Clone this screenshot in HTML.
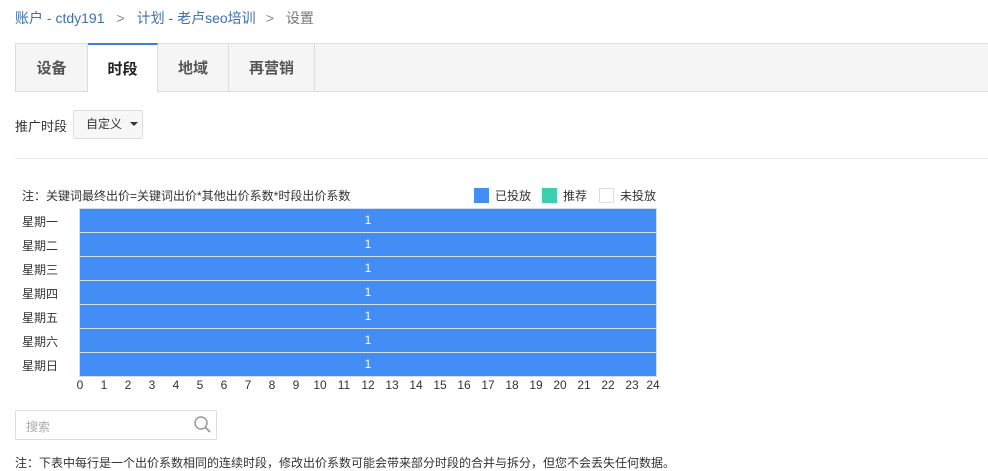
<!DOCTYPE html><html><head><meta charset="utf-8"><style>
body{margin:0;width:988px;height:470px;background:#fff;font-family:"Liberation Sans","Noto Sans CJK SC",sans-serif;font-size:12px;color:#333;position:relative;overflow:hidden}
.a{position:absolute}
.bc{left:15px;top:8px;font-size:14px;color:#3f6fb0}
.bc span{color:#888;margin:0 12px}
.tabs{left:15px;top:43px;width:973px;height:47px;background:#f5f5f5;border:1px solid #ddd;border-right:none}
.tab{position:absolute;top:0;height:47px;line-height:49px;text-align:center;font-size:15px;font-weight:bold;color:#555;border-right:1px solid #ddd}
.act{background:#fff;color:#222;border-top:2px solid #3b82d6;top:-1px;height:48px}
.dd{left:73px;top:110px;width:68px;height:27px;border:1px solid #ddd;border-radius:2px;background:#f7f7f7;line-height:27px;font-size:12px}
.row{position:absolute;left:80px;width:576px;height:23px;background:#428ef5;color:#fff;text-align:center;line-height:23px;font-size:12px}
.day{position:absolute;left:22px;font-size:12px}
.ax{position:absolute;top:378px;font-size:12px;width:20px;text-align:center}
.sw{display:inline-block;width:15px;height:15px;vertical-align:-3px;margin-right:6px}
</style></head><body>
<div class="a bc">账户 - ctdy191<span>&gt;</span>计划 - 老卢seo培训<span style="margin-left:10px">&gt;</span><b style="font-weight:normal;color:#777">设置</b></div>
<div class="a tabs">
<div class="tab" style="left:0;width:71px">设备</div>
<div class="tab act" style="left:72px;width:69px">时段</div>
<div class="tab" style="left:142px;width:70px">地域</div>
<div class="tab" style="left:213px;width:85px">再营销</div>
</div>
<div class="a" style="left:15px;top:116px;font-size:13px">推广时段</div>
<div class="a dd"><span style="margin-left:12px">自定义</span><span style="position:absolute;left:56px;top:11px;border:4px solid transparent;border-top:4px solid #333;border-bottom:0"></span></div>
<div class="a" style="left:15px;top:158px;width:973px;height:1px;background:#e8e8e8"></div>
<div class="a" style="left:22px;top:187px">注：关键词最终出价=关键词出价*其他出价系数*时段出价系数</div>
<div class="a" style="left:474px;top:187px"><span class="sw" style="background:#428ef5"></span>已投放<span class="sw" style="background:#3ccfae;margin-left:11px"></span>推荐<span class="sw" style="border:1px solid #ddd;width:13px;height:13px;margin-left:12px"></span>未投放</div>
<div class="a" style="left:79px;top:208px;width:578px;height:169px;background:#cfe0f7"></div>
<div class="row" style="top:209px">1</div><div class="row" style="top:233px">1</div><div class="row" style="top:257px">1</div><div class="row" style="top:281px">1</div><div class="row" style="top:305px">1</div><div class="row" style="top:329px">1</div><div class="row" style="top:353px">1</div>
<div class="day" style="top:213px">星期一</div><div class="day" style="top:237px">星期二</div><div class="day" style="top:261px">星期三</div><div class="day" style="top:285px">星期四</div><div class="day" style="top:309px">星期五</div><div class="day" style="top:333px">星期六</div><div class="day" style="top:357px">星期日</div>
<div class="ax" style="left:70px">0</div><div class="ax" style="left:94px">1</div><div class="ax" style="left:118px">2</div><div class="ax" style="left:142px">3</div><div class="ax" style="left:166px">4</div><div class="ax" style="left:190px">5</div><div class="ax" style="left:214px">6</div><div class="ax" style="left:238px">7</div><div class="ax" style="left:262px">8</div><div class="ax" style="left:286px">9</div><div class="ax" style="left:310px">10</div><div class="ax" style="left:334px">11</div><div class="ax" style="left:358px">12</div><div class="ax" style="left:382px">13</div><div class="ax" style="left:406px">14</div><div class="ax" style="left:430px">15</div><div class="ax" style="left:454px">16</div><div class="ax" style="left:478px">17</div><div class="ax" style="left:502px">18</div><div class="ax" style="left:526px">19</div><div class="ax" style="left:550px">20</div><div class="ax" style="left:574px">21</div><div class="ax" style="left:598px">22</div><div class="ax" style="left:622px">23</div><div class="ax" style="left:643px">24</div>
<div class="a" style="left:15px;top:410px;width:200px;height:28px;border:1px solid #ddd;border-radius:2px"><span style="position:absolute;left:10px;top:7px;color:#aaa">搜索</span>
<svg style="position:absolute;left:177px;top:4px" width="20" height="20" viewBox="0 0 20 20"><circle cx="8" cy="8" r="6" fill="none" stroke="#999" stroke-width="1.5"/><path d="M12.5 12.5L17 17" stroke="#999" stroke-width="1.8"/></svg></div>
<div class="a" style="left:15px;top:454px">注：下表中每行是一个出价系数相同的连续时段，修改出价系数可能会带来部分时段的合并与拆分，但您不会丢失任何数据。</div>
</body></html>
